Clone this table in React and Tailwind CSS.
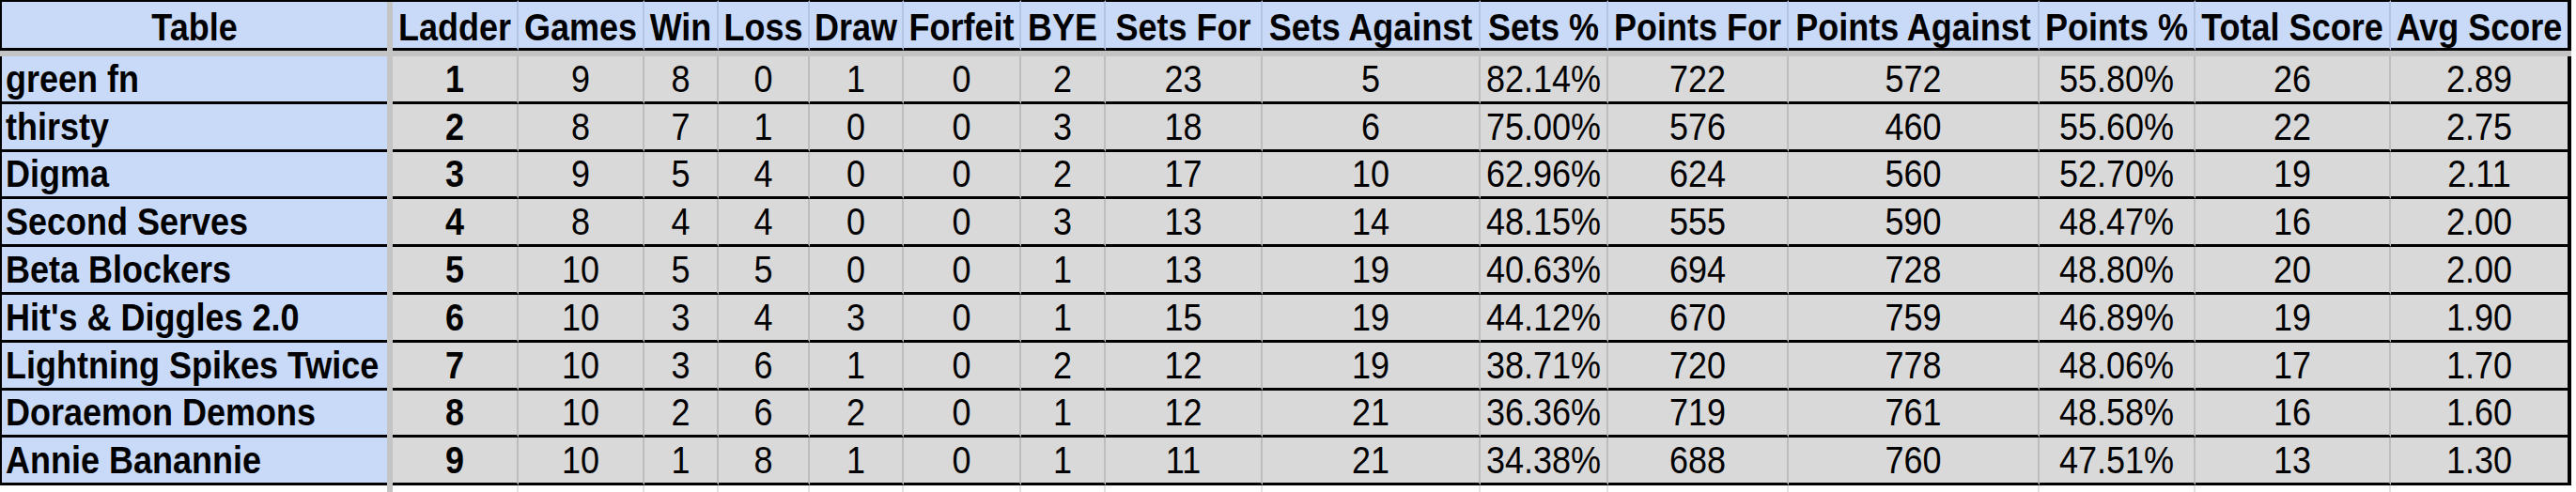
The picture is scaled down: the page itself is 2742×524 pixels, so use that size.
import React from "react";

const W = [
  "w-[134px]",
  "w-[134px]",
  "w-[79px]",
  "w-[97px]",
  "w-[100px]",
  "w-[125px]",
  "w-[90px]",
  "w-[167px]",
  "w-[232px]",
  "w-[136px]",
  "w-[192px]",
  "w-[267px]",
  "w-[166px]",
  "w-[208px]",
  "w-[188px]",
];

const HEAD = [
  "Ladder",
  "Games",
  "Win",
  "Loss",
  "Draw",
  "Forfeit",
  "BYE",
  "Sets For",
  "Sets Against",
  "Sets %",
  "Points For",
  "Points Against",
  "Points %",
  "Total Score",
  "Avg Score",
];

const ROWS = [
  ["green fn", 1, 9, 8, 0, 1, 0, 2, 23, 5, "82.14%", 722, 572, "55.80%", 26, "2.89"],
  ["thirsty", 2, 8, 7, 1, 0, 0, 3, 18, 6, "75.00%", 576, 460, "55.60%", 22, "2.75"],
  ["Digma", 3, 9, 5, 4, 0, 0, 2, 17, 10, "62.96%", 624, 560, "52.70%", 19, "2.11"],
  ["Second Serves", 4, 8, 4, 4, 0, 0, 3, 13, 14, "48.15%", 555, 590, "48.47%", 16, "2.00"],
  ["Beta Blockers", 5, 10, 5, 5, 0, 0, 1, 13, 19, "40.63%", 694, 728, "48.80%", 20, "2.00"],
  ["Hit's & Diggles 2.0", 6, 10, 3, 4, 3, 0, 1, 15, 19, "44.12%", 670, 759, "46.89%", 19, "1.90"],
  ["Lightning Spikes Twice", 7, 10, 3, 6, 1, 0, 2, 12, 19, "38.71%", 720, 778, "48.06%", 17, "1.70"],
  ["Doraemon Demons", 8, 10, 2, 6, 2, 0, 1, 12, 21, "36.36%", 719, 761, "48.58%", 16, "1.60"],
  ["Annie Banannie", 9, 10, 1, 8, 1, 0, 1, 11, 21, "34.38%", 688, 760, "47.51%", 13, "1.30"],
];

function T({ children }) {
  return (
    <span className="inline-block scale-y-[1.12] origin-[50%_80%]">{children}</span>
  );
}

function HeaderRow() {
  return (
    <div className="flex h-[54px]">
      <div className="w-[412px] h-full box-border bg-[#c9daf8] border-t-2 border-b-[3px] border-l-2 border-black flex items-end justify-center font-bold leading-[40px]">
        <T>Table</T>
      </div>
      <div className="w-[6px] h-full box-border bg-[#c4c4c4] border-t-2 border-black" />
      {HEAD.map((h, i) => (
        <div
          key={h}
          className={
            W[i] +
            " h-full box-border bg-[#c9daf8] border-t-2 border-b-[3px] border-t-black border-b-black flex items-end justify-center font-bold leading-[40px] whitespace-nowrap " +
            (i < HEAD.length - 1 ? "border-r-2 border-r-[#b4c5e4]" : "")
          }
        >
          <T>{h}</T>
        </div>
      ))}
      <div className="w-[4px] h-full bg-black" />
      <div className="flex-1 h-full bg-white" />
    </div>
  );
}

function BodyRow({ row }) {
  const [name, ...vals] = row;
  return (
    <div className="flex h-[50.8px]">
      <div className="w-[412px] h-full box-border bg-[#c9daf8] border-l-2 border-b-[3px] border-black flex items-end pl-[4px] pb-[2px] font-bold leading-[40px] whitespace-nowrap">
        <T>{name}</T>
      </div>
      <div className="w-[6px] h-full bg-[#c4c4c4]" />
      {vals.map((v, i) => (
        <div
          key={i}
          className={
            W[i] +
            " h-full box-border bg-[#d9d9d9] border-b-[3px] border-b-black flex items-end justify-center pb-[2px] leading-[40px] whitespace-nowrap " +
            (i === 0 ? "font-bold " : "") +
            (i < vals.length - 1 ? "border-r-2 border-r-[#bdbdbd]" : "")
          }
        >
          <T>{v}</T>
        </div>
      ))}
      <div className="w-[4px] h-full bg-black" />
      <div className="flex-1 h-full bg-white" />
    </div>
  );
}

function FillerRow() {
  return (
    <div className="flex flex-1">
      <div className="w-[412px] h-full bg-white" />
      <div className="w-[6px] h-full bg-[#c4c4c4]" />
      {W.map((w, i) => (
        <div
          key={i}
          className={
            w +
            " h-full box-border bg-white " +
            (i < W.length - 1 ? "border-r-2 border-r-[#e2e2e2]" : "")
          }
        />
      ))}
      <div className="flex-1 h-full bg-white" />
    </div>
  );
}

export default function App() {
  return (
    <div className="w-[2742px] h-[524px] bg-white flex flex-col overflow-hidden text-black text-[36px] font-['Liberation_Sans',Arial,sans-serif]">
      <HeaderRow />
      <div className="flex h-[6px]">
        <div className="w-[2737px] h-full bg-[#c4c4c4]" />
        <div className="flex-1 h-full bg-white" />
      </div>
      {ROWS.map((r) => (
        <BodyRow key={r[0]} row={r} />
      ))}
      <FillerRow />
    </div>
  );
}
